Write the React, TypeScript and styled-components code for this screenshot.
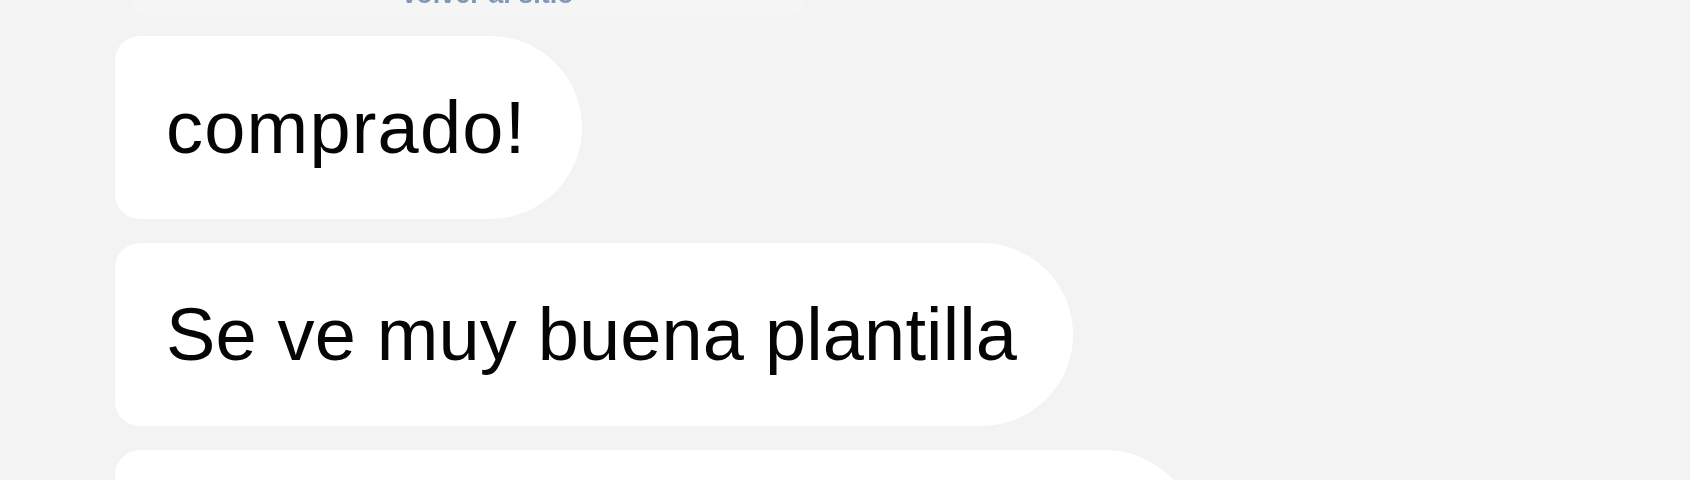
import React from "react";
import styled, { createGlobalStyle } from "styled-components";

const GlobalStyle = createGlobalStyle`
  html, body {
    margin: 0;
    padding: 0;
    background: #f3f3f3;
    overflow: hidden;
  }
  body {
    font-family: "Liberation Sans", Arial, Helvetica, sans-serif;
  }
`;

const Thread = styled.div`
  width: 1690px;
  height: 480px;
  overflow: hidden;
  box-sizing: border-box;
  padding-left: 115px;
  display: flex;
  flex-direction: column;
  align-items: flex-start;
  background: #f3f3f3;
`;

const LinkCard = styled.div`
  flex-shrink: 0;
  margin-top: -30px;
  margin-left: 18px;
  width: 670px;
  height: 46px;
  box-sizing: border-box;
  display: flex;
  align-items: flex-end;
  justify-content: center;
  padding: 0 0 8px 38px;
  background: #f5f5f5;
  border-radius: 0 0 14px 14px;
`;

const LinkText = styled.span`
  font-size: 27px;
  line-height: 27px;
  font-weight: 700;
  color: #8296b0;
  filter: blur(0.6px);
`;

const Messages = styled.div`
  flex-shrink: 0;
  margin-top: 20px;
  display: flex;
  flex-direction: column;
  align-items: flex-start;
  gap: 24px;
`;

const Bubble = styled.div<{ $tracking: number }>`
  background: #ffffff;
  color: #050505;
  height: 183px;
  box-sizing: border-box;
  display: flex;
  align-items: center;
  padding: 0 56px 0 51px;
  border-radius: 25px 92px 92px 25px;
  font-size: 74px;
  line-height: 85px;
  letter-spacing: ${(p) => p.$tracking}px;
  white-space: nowrap;
  flex-shrink: 0;
`;

const messages = [
  { text: "comprado!", tracking: 1.2 },
  { text: "Se ve muy buena plantilla", tracking: 0.15 },
  { text: "Muchas gracias por la ayuda!", tracking: 0.3 },
];

export default function App() {
  return (
    <>
      <GlobalStyle />
      <Thread>
        <LinkCard>
          <LinkText>Volver al sitio</LinkText>
        </LinkCard>
        <Messages>
          {messages.map((m) => (
            <Bubble key={m.text} $tracking={m.tracking}>
              {m.text}
            </Bubble>
          ))}
        </Messages>
      </Thread>
    </>
  );
}
